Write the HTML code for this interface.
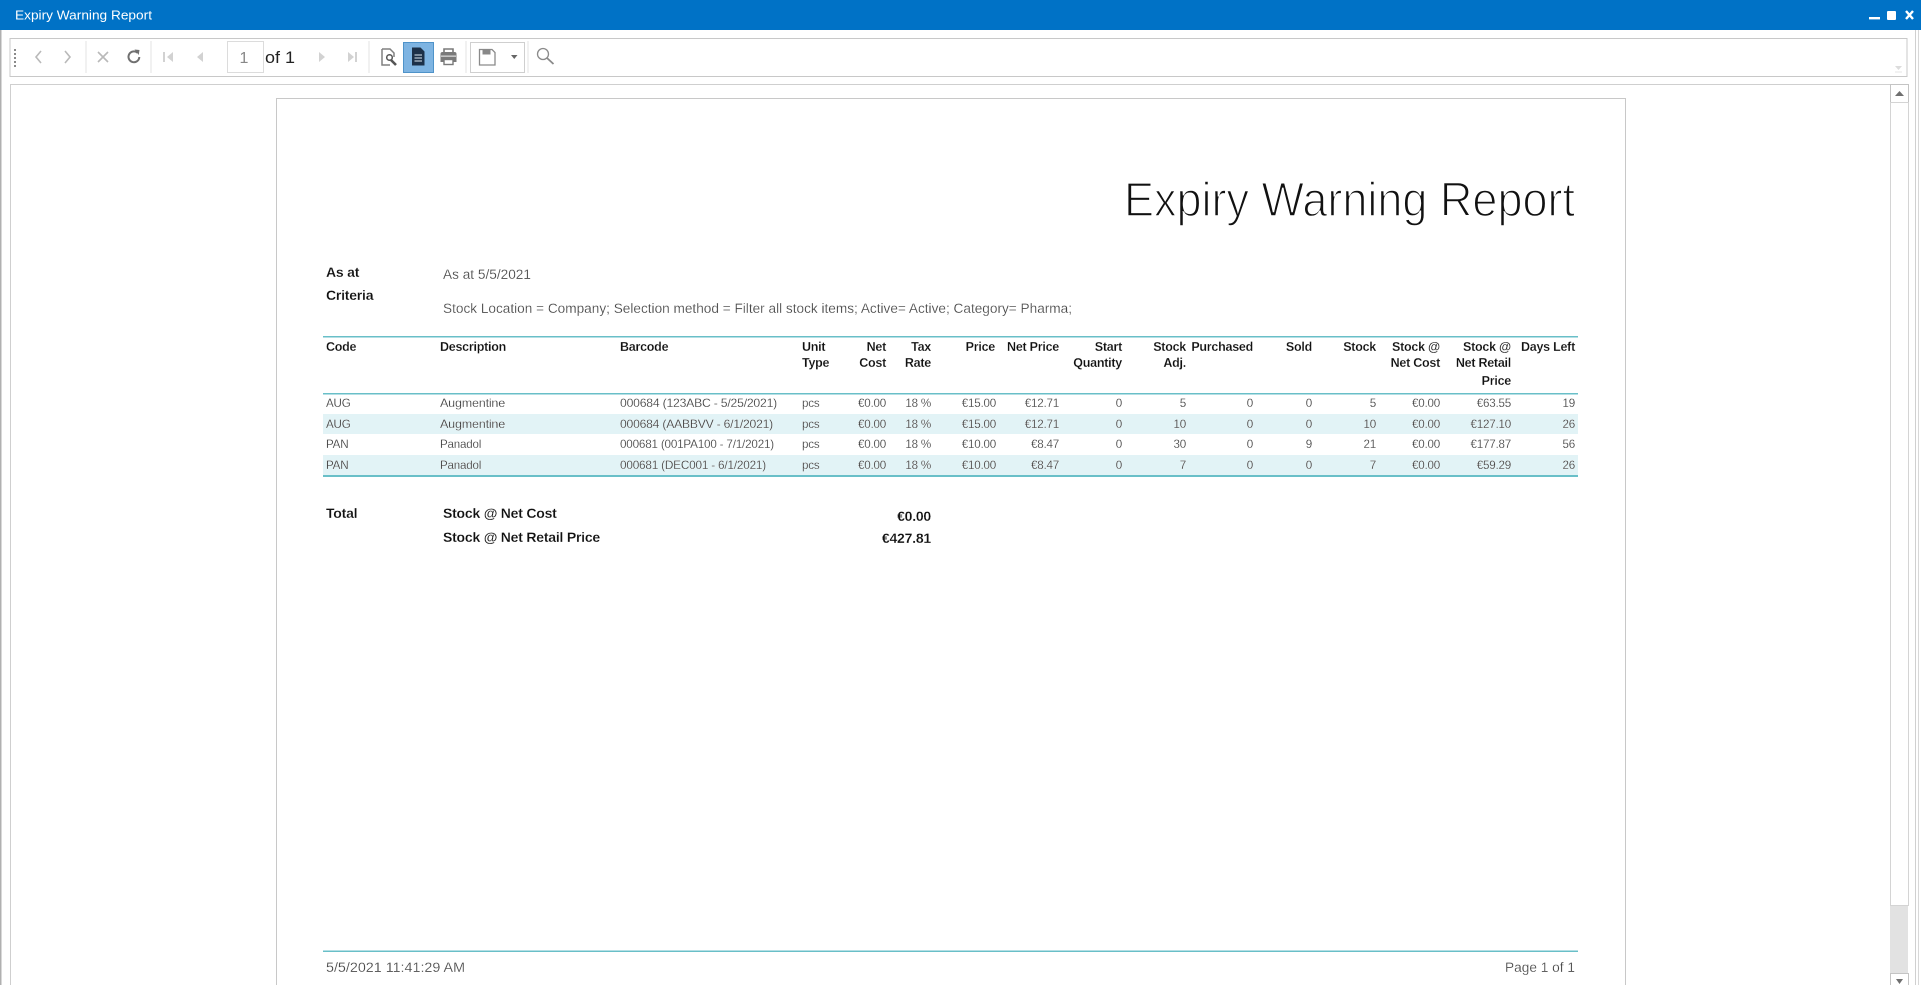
<!DOCTYPE html>
<html><head><meta charset="utf-8"><title>Expiry Warning Report</title>
<style>
html,body{margin:0;padding:0;background:#fff;width:1921px;height:985px;overflow:hidden}
svg{display:block;position:absolute;left:0;top:0;filter:blur(.35px)}
text{font-family:"Liberation Sans",sans-serif}
.h{font-size:12.5px;font-weight:700;fill:#111;letter-spacing:-.25px;stroke:#fff;stroke-width:.15px}
.d{font-size:11.6px;fill:#3c3c3c;letter-spacing:-.2px;stroke:#fff;stroke-width:.15px}
.e{text-anchor:end}
.b{font-size:14px;font-weight:700;fill:#111;letter-spacing:-.22px;stroke:#fff;stroke-width:.15px}
.l{font-size:13.5px;fill:#444;stroke:#fff;stroke-width:.18px}
.ic{fill:none;stroke:#b9b9b9;stroke-width:1.6}
</style></head><body>
<svg width="1921" height="985" viewBox="0 0 1921 985" xmlns="http://www.w3.org/2000/svg">
<rect width="1921" height="30" fill="#0072c6"/>
<rect x="0" y="30" width="1.5" height="955" fill="#b0b0b0"/>
<rect x="1915" y="30" width="1" height="955" fill="#d0d0d0"/>
<rect x="1918" y="30" width="1" height="955" fill="#d8d8d8"/>
<text x="15" y="19.5" fill="#fff" font-size="13" textLength="137" lengthAdjust="spacingAndGlyphs">Expiry Warning Report</text>
<rect x="1869" y="17" width="11" height="2.4" fill="#fff"/>
<rect x="1887" y="11" width="9" height="9" fill="#fff" rx="1"/>
<path d="M1906 11l7 8M1913 11l-7 8" stroke="#fff" stroke-width="2.4"/>
<rect x="10" y="38.5" width="1897" height="38" fill="#fff" stroke="#c8c8c8"/>
<g fill="#8a8a8a"><rect x="14" y="49" width="2" height="2"/><rect x="14" y="53" width="2" height="2"/><rect x="14" y="57" width="2" height="2"/><rect x="14" y="61" width="2" height="2"/><rect x="14" y="65" width="2" height="2"/></g>
<path class="ic" d="M41 51l-5 6 5 6M65 51l5 6-5 6M98 52l10 10M108 52l-10 10"/>
<path d="M137.500 52.800a5.400 5.400 0 1 0 1.800 4.200" fill="none" stroke="#707070" stroke-width="2"/>
<path d="M134.500 49.500l5 .5-.8 5z" fill="#707070"/>
<g stroke="#e3e3e3"><path d="M86 41v32M151 41v32M369 41v32M466 41v32M528 41v32"/></g>
<path d="M164 52v10" stroke="#d2d2d2" stroke-width="2"/><path d="M173 52l-6 5 6 5zM203 52l-6 5 6 5zM319 52l6 5-6 5zM348 52l6 5-6 5z" fill="#d2d2d2"/><path d="M356 52v10" stroke="#d2d2d2" stroke-width="2"/>
<rect x="227.500" y="41.500" width="36" height="31" fill="#fff" stroke="#dcdcdc"/>
<text x="244" y="63" font-size="16" fill="#888" text-anchor="middle">1</text>
<text x="265" y="63" font-size="16.500" fill="#222" textLength="30" lengthAdjust="spacingAndGlyphs">of 1</text>
<path d="M382 49h8l4 4v4M382 49v16h8" fill="#fff" stroke="#808080" stroke-width="1.500"/>
<circle cx="389.500" cy="57.500" r="2.800" fill="none" stroke="#555" stroke-width="1.500"/><path d="M391 60l5 5" stroke="#555" stroke-width="2.600"/>
<rect x="403.500" y="42.500" width="30" height="30" fill="#7eb4e2" stroke="#4f93c9"/>
<path d="M412 47.500h8.500l4 4v14h-12.500z" fill="#1c3048"/><path d="M414.500 55h7.500M414.500 58h7.500M414.500 61h7.500" stroke="#dbe8f2" stroke-width="1.100"/>
<path d="M444 52v-3h9v3" fill="none" stroke="#7a7a7a" stroke-width="1.600"/>
<path d="M444 62h-3.500v-8a2 2 0 0 1 2-2h12a2 2 0 0 1 2 2v8h-3.500" fill="#7a7a7a"/>
<rect x="444" y="59.500" width="9" height="5" fill="#fff" stroke="#7a7a7a" stroke-width="1.400"/>
<rect x="441" y="55.500" width="15" height="1.300" fill="#d8d8d8"/>
<rect x="470.500" y="42.500" width="54" height="30" fill="#fff" stroke="#cfcfcf"/>
<path d="M479.500 49.500h12.500l3 3v12.500h-15.500z" fill="#fff" stroke="#8a8a8a" stroke-width="1.300"/><rect x="482.500" y="49.500" width="8" height="5" fill="#888"/>
<path d="M511 55h6.500l-3.250 4z" fill="#666"/>
<circle cx="543" cy="54" r="5.500" fill="none" stroke="#8a8a8a" stroke-width="1.300"/><path d="M547 58l6.500 6" stroke="#8a8a8a" stroke-width="1.800"/>
<path d="M1895 66h7l-3.500 4z" fill="#dcdcdc"/><path d="M1895 72h7" stroke="#e4e4e4"/>
<rect x="10.500" y="84.500" width="1897" height="905" fill="#fff" stroke="#cfcfcf"/>
<rect x="1890" y="84" width="18" height="901" fill="#fff"/>
<rect x="1890.500" y="84.500" width="18" height="18" fill="#fff" stroke="#c4c4c4"/>
<path d="M1895 96h9l-4.500-5z" fill="#6f6f6f"/>
<rect x="1890.500" y="102.500" width="18" height="803" fill="#fff" stroke="#d4d4d4"/>
<rect x="1890" y="906" width="18" height="67" fill="#e2e2e2"/>
<rect x="1890.500" y="973.500" width="18" height="13" fill="#fff" stroke="#c4c4c4"/>
<path d="M1896 979h7l-3.500 5z" fill="#6f6f6f"/>
<rect x="276.500" y="98.500" width="1349" height="900" fill="#fff" stroke="#c8c8c8"/>
<text x="1575" y="216" class="e" font-size="48" fill="#111" stroke="#fff" stroke-width="1.500" textLength="451" lengthAdjust="spacingAndGlyphs">Expiry Warning Report</text>
<text x="326" y="277" class="b" font-size="13.500">As at</text>
<text x="326" y="300" class="b" font-size="13.500">Criteria</text>
<text x="443" y="279" class="l" textLength="88" lengthAdjust="spacingAndGlyphs">As at 5/5/2021</text>
<text x="443" y="313" class="l" textLength="629" lengthAdjust="spacingAndGlyphs">Stock Location = Company; Selection method = Filter all stock items; Active= Active; Category= Pharma;</text>
<rect x="323" y="414" width="1255" height="20" fill="#e2f3f6"/>
<rect x="323" y="455" width="1255" height="20" fill="#e2f3f6"/>
<rect x="323" y="336" width="1255" height="1.500" fill="#69bfc8"/>
<rect x="323" y="393" width="1255" height="1.500" fill="#69bfc8"/>
<rect x="323" y="475" width="1255" height="2" fill="#69bfc8"/>
<g class="hdr">
<text x="326" y="351" class="h">Code</text>
<text x="440" y="351" class="h">Description</text>
<text x="620" y="351" class="h">Barcode</text>
<text x="802" y="351" class="h">Unit</text><text x="802" y="367" class="h">Type</text>
<text x="886" y="351" class="h e">Net</text><text x="886" y="367" class="h e">Cost</text>
<text x="931" y="351" class="h e">Tax</text><text x="931" y="367" class="h e">Rate</text>
<text x="995" y="351" class="h e">Price</text>
<text x="1059" y="351" class="h e">Net Price</text>
<text x="1122" y="351" class="h e">Start</text><text x="1122" y="367" class="h e">Quantity</text>
<text x="1186" y="351" class="h e">Stock</text><text x="1186" y="367" class="h e">Adj.</text>
<text x="1253" y="351" class="h e">Purchased</text>
<text x="1312" y="351" class="h e">Sold</text>
<text x="1376" y="351" class="h e">Stock</text>
<text x="1440" y="351" class="h e">Stock @</text><text x="1440" y="367" class="h e">Net Cost</text>
<text x="1511" y="351" class="h e">Stock @</text><text x="1511" y="367" class="h e">Net Retail</text><text x="1511" y="385" class="h e">Price</text>
<text x="1575" y="351" class="h e">Days Left</text>
</g>
<g>
<text x="326" y="407" class="d">AUG</text><text x="440" y="407" class="d" textLength="65" lengthAdjust="spacingAndGlyphs">Augmentine</text><text x="620" y="407" class="d" textLength="157" lengthAdjust="spacingAndGlyphs">000684 (123ABC - 5/25/2021)</text><text x="802" y="407" class="d">pcs</text><text x="886" y="407" class="d e">€0.00</text><text x="931" y="407" class="d e">18 %</text><text x="996" y="407" class="d e">€15.00</text><text x="1059" y="407" class="d e">€12.71</text><text x="1122" y="407" class="d e">0</text><text x="1186" y="407" class="d e">5</text><text x="1253" y="407" class="d e">0</text><text x="1312" y="407" class="d e">0</text><text x="1376" y="407" class="d e">5</text><text x="1440" y="407" class="d e">€0.00</text><text x="1511" y="407" class="d e">€63.55</text><text x="1575" y="407" class="d e">19</text>
<text x="326" y="428" class="d">AUG</text><text x="440" y="428" class="d" textLength="65" lengthAdjust="spacingAndGlyphs">Augmentine</text><text x="620" y="428" class="d" textLength="153" lengthAdjust="spacingAndGlyphs">000684 (AABBVV - 6/1/2021)</text><text x="802" y="428" class="d">pcs</text><text x="886" y="428" class="d e">€0.00</text><text x="931" y="428" class="d e">18 %</text><text x="996" y="428" class="d e">€15.00</text><text x="1059" y="428" class="d e">€12.71</text><text x="1122" y="428" class="d e">0</text><text x="1186" y="428" class="d e">10</text><text x="1253" y="428" class="d e">0</text><text x="1312" y="428" class="d e">0</text><text x="1376" y="428" class="d e">10</text><text x="1440" y="428" class="d e">€0.00</text><text x="1511" y="428" class="d e">€127.10</text><text x="1575" y="428" class="d e">26</text>
<text x="326" y="448" class="d">PAN</text><text x="440" y="448" class="d">Panadol</text><text x="620" y="448" class="d" textLength="154" lengthAdjust="spacingAndGlyphs">000681 (001PA100 - 7/1/2021)</text><text x="802" y="448" class="d">pcs</text><text x="886" y="448" class="d e">€0.00</text><text x="931" y="448" class="d e">18 %</text><text x="996" y="448" class="d e">€10.00</text><text x="1059" y="448" class="d e">€8.47</text><text x="1122" y="448" class="d e">0</text><text x="1186" y="448" class="d e">30</text><text x="1253" y="448" class="d e">0</text><text x="1312" y="448" class="d e">9</text><text x="1376" y="448" class="d e">21</text><text x="1440" y="448" class="d e">€0.00</text><text x="1511" y="448" class="d e">€177.87</text><text x="1575" y="448" class="d e">56</text>
<text x="326" y="469" class="d">PAN</text><text x="440" y="469" class="d">Panadol</text><text x="620" y="469" class="d" textLength="146" lengthAdjust="spacingAndGlyphs">000681 (DEC001 - 6/1/2021)</text><text x="802" y="469" class="d">pcs</text><text x="886" y="469" class="d e">€0.00</text><text x="931" y="469" class="d e">18 %</text><text x="996" y="469" class="d e">€10.00</text><text x="1059" y="469" class="d e">€8.47</text><text x="1122" y="469" class="d e">0</text><text x="1186" y="469" class="d e">7</text><text x="1253" y="469" class="d e">0</text><text x="1312" y="469" class="d e">0</text><text x="1376" y="469" class="d e">7</text><text x="1440" y="469" class="d e">€0.00</text><text x="1511" y="469" class="d e">€59.29</text><text x="1575" y="469" class="d e">26</text>
</g>
<text x="326" y="518" class="b">Total</text>
<text x="443" y="518" class="b">Stock @ Net Cost</text>
<text x="443" y="542" class="b">Stock @ Net Retail Price</text>
<text x="931" y="521" class="b e">€0.00</text>
<text x="931" y="543" class="b e">€427.81</text>
<rect x="323" y="950.500" width="1255" height="1.500" fill="#69bfc8"/>
<text x="326" y="972" class="l" font-size="14.500" textLength="139" lengthAdjust="spacingAndGlyphs">5/5/2021 11:41:29 AM</text>
<text x="1575" y="972" class="l e" font-size="14.500" textLength="70" lengthAdjust="spacingAndGlyphs">Page 1 of 1</text>
</svg>
</body></html>
